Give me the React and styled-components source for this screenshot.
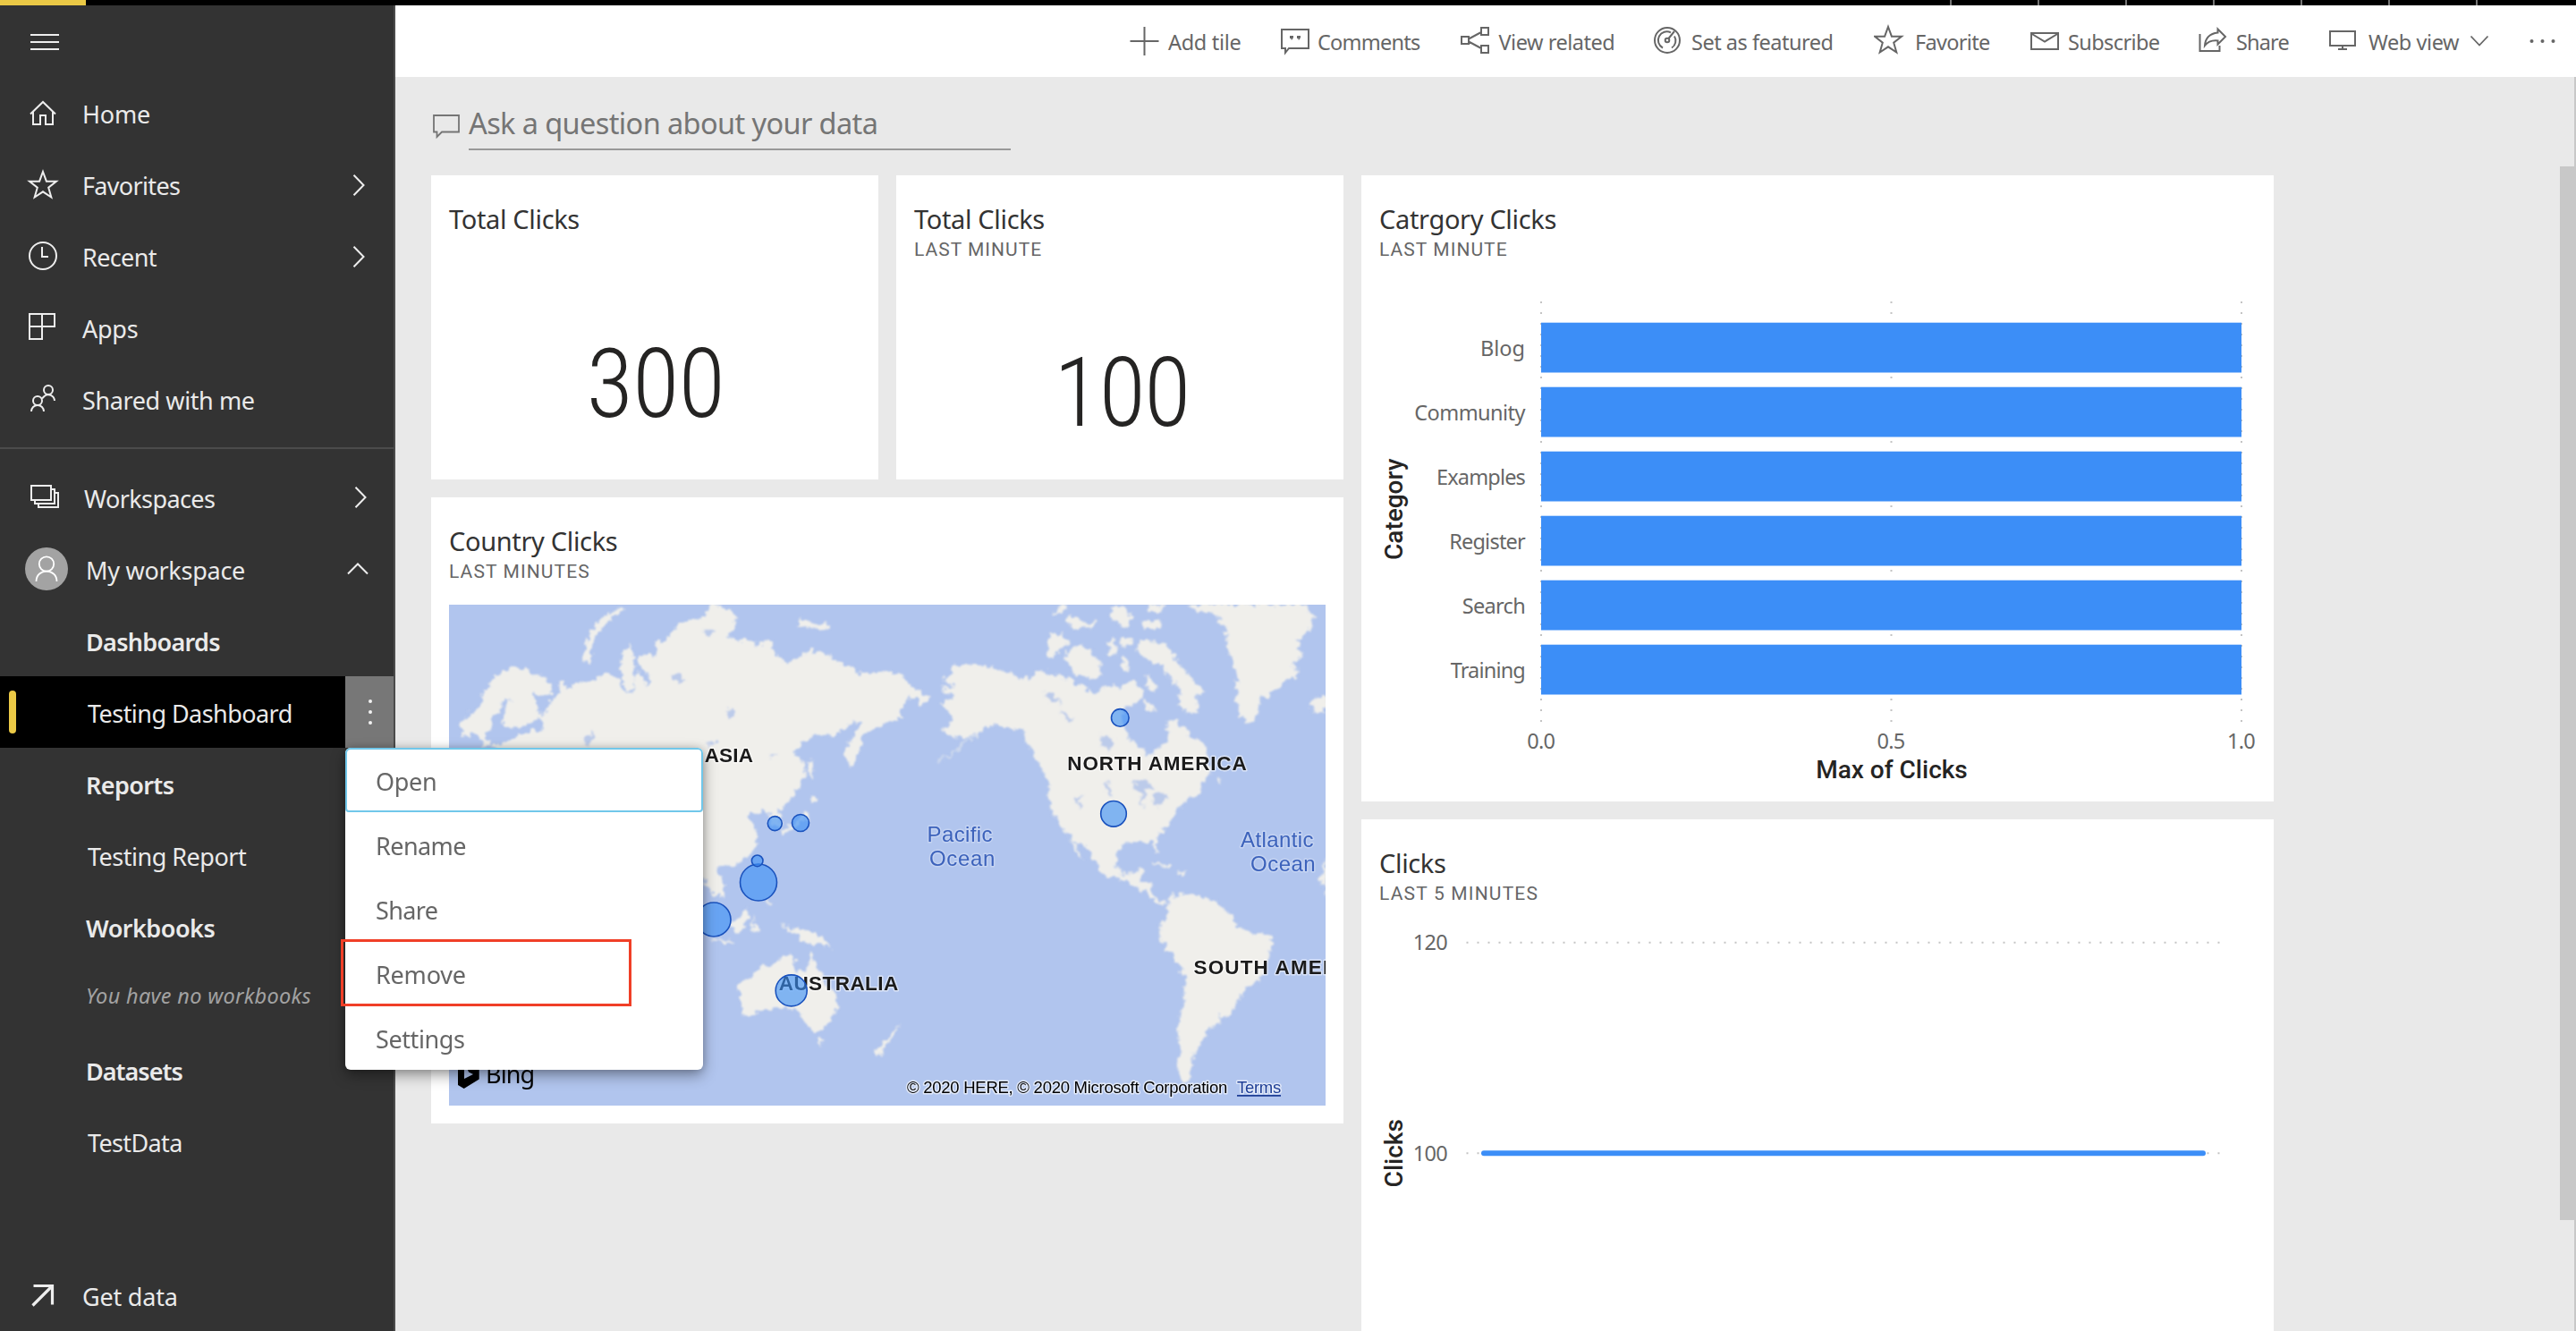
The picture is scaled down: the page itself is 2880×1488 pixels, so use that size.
import React from "react";
import styled, { createGlobalStyle, css } from "styled-components";

const UI = '"Noto Sans", "Open Sans", sans-serif';
const DIN = 'Roboto, "Noto Sans", sans-serif';
const MAP = '"Liberation Sans", Arial, sans-serif';

const GlobalStyle = createGlobalStyle`
  *, *::before, *::after { box-sizing: border-box; }
  html, body { margin: 0; padding: 0; background: #eaeaea; overflow: hidden; }
  body { font-family: ${UI}; font-weight: 370; }
  svg { display: block; flex: none; }
`;

const Page = styled.div`
  display: flex;
  flex-direction: column;
  width: 2880px;
  height: 1488px;
  overflow: hidden;
`;

const TopStrip = styled.div`
  display: flex;
  flex: none;
  height: 6px;
  background: #000;
`;
const TopAccent = styled.div`
  width: 96px;
  background: #ebc946;
  margin-right: auto;
`;
const TopCell = styled.div`
  width: 98px;
  border-left: 2px solid #767676;
  &:last-child { width: 112px; }
`;

const Body = styled.div`
  display: flex;
  flex: 1;
  min-height: 0;
`;

/* ---------- sidebar ---------- */

const Sidebar = styled.nav`
  position: relative;
  z-index: 2;
  display: flex;
  flex-direction: column;
  flex: none;
  width: 442px;
  background: #333;
  border-right: 2px solid #4b4b4b;
  color: #eaeaea;
`;
const MenuToggle = styled.div`
  display: flex;
  align-items: center;
  height: 82px;
  padding-left: 28px;
`;
const NavRow = styled.div`
  display: grid;
  grid-template-columns: ${(p) => p.$text}px 1fr auto;
  align-items: center;
  height: ${(p) => p.$height || 80}px;
`;
const NavGroup = styled.div`
  ${(p) => p.$ruled && css`
    margin-top: 12px;
    padding-top: 14px;
    border-top: 2px solid #4b4b4b;
  `}
`;
const IconSlot = styled.span`
  padding-left: 28px;
`;
const NavLabel = styled.span`
  font-size: 27px;
  line-height: 40px;
  font-weight: ${(p) => (p.$strong ? 590 : 370)};
  letter-spacing: ${(p) => p.$ls}px;
  white-space: nowrap;
  padding-top: ${(p) => p.$drop || 0}px;
`;
const EmptyNote = styled.span`
  font-size: 23.5px;
  line-height: 36px;
  font-style: italic;
  letter-spacing: 0.31px;
  color: #a2a2a2;
  white-space: nowrap;
  padding-bottom: 6px;
`;
const ChevronSlot = styled.span`
  padding-right: ${(p) => p.$right}px;
  padding-bottom: ${(p) => p.$lift || 0}px;
`;
const Avatar = styled.span`
  display: flex;
  width: 48px;
  height: 48px;
  margin-left: 28px;
  border-radius: 50%;
  background: #a3a3a3;
`;
const ActiveRow = styled.div`
  display: grid;
  grid-template-columns: 10px 8px 80px 1fr 54px;
  align-items: center;
  height: 80px;
  background: #000;
`;
const ActiveMark = styled.span`
  grid-column: 2;
  height: 48px;
  border-radius: 4px;
  background: #ebc946;
`;
const ActiveLabel = styled(NavLabel)`
  grid-column: 4;
`;
const MoreButton = styled.div`
  position: relative;
  grid-column: 5;
  display: flex;
  flex-direction: column;
  align-items: center;
  justify-content: center;
  gap: 8px;
  height: 80px;
  padding-left: 2px;
  background: #777;
`;
const MoreDot = styled.span`
  width: 4px;
  height: 4px;
  border-radius: 50%;
  background: #f2f2f2;
`;
const BottomSlot = styled.div`
  margin-top: auto;
`;

/* ---------- context menu ---------- */

const Menu = styled.div`
  position: absolute;
  top: 80px;
  left: 0;
  width: 400px;
  border-radius: 6px;
  background: #fff;
  box-shadow: 0 6px 16px rgba(0, 0, 0, 0.38), 0 0 10px rgba(0, 0, 0, 0.16);
`;
const MenuItem = styled.div`
  position: relative;
  display: flex;
  align-items: center;
  height: 72px;
  padding: 3px 0 0 34px;
  font-size: 27px;
  letter-spacing: ${(p) => p.$ls}px;
  color: #666;
  ${(p) => p.$focused && css`
    padding: 3px 0 0 32px;
    border: 2px solid #71c7ea;
    border-radius: 6px 6px 4px 4px;
  `}
`;
const Highlight = styled.span`
  position: absolute;
  left: -5px;
  top: -2px;
  width: 325px;
  height: 75px;
  border: 3px solid #f03f27;
`;

/* ---------- main ---------- */

const Main = styled.main`
  position: relative;
  display: flex;
  flex-direction: column;
  flex: 1;
  min-width: 0;
  overflow: hidden;
  background: #e9e9e9;
`;
const ActionBar = styled.header`
  display: flex;
  flex: none;
  align-items: center;
  height: 80px;
  padding-left: 821px;
  background: #fff;
  color: #666;
`;
const Action = styled.div`
  display: flex;
  align-items: center;
  width: ${(p) => p.$width}px;
  flex: none;
`;
const ActionLabel = styled.span`
  margin-left: ${(p) => p.$gap}px;
  padding-top: 2px;
  font-size: 23.5px;
  line-height: 34px;
  letter-spacing: ${(p) => p.$ls}px;
  white-space: nowrap;
`;
const ActionChevron = styled.span`
  margin-left: 12px;
`;

const AskBar = styled.div`
  display: flex;
  flex: none;
  align-items: flex-start;
  height: 110px;
  padding: 24px 0 0 40px;
`;
const AskIcon = styled.span`
  width: 42px;
  padding-top: 17px;
`;
const AskField = styled.div`
  width: 606px;
  height: 58px;
  border-bottom: 2px solid #999;
  font-size: 32.5px;
  line-height: 56px;
  letter-spacing: -0.61px;
  color: #757575;
  white-space: nowrap;
`;

const Board = styled.section`
  display: grid;
  grid-template-columns: 500px 500px 1020px;
  grid-auto-rows: 340px;
  gap: 20px;
  padding-left: 40px;
`;
const Tile = styled.article`
  display: flex;
  flex-direction: column;
  grid-column: ${(p) => p.$col};
  grid-row: ${(p) => p.$row};
  background: #fff;
`;
const TileHeader = styled.div`
  flex: none;
  padding: 30px 20px 0;
`;
const TileTitle = styled.div`
  font-size: 29px;
  line-height: 38px;
  letter-spacing: -0.34px;
  color: #333;
`;
const TileSubtitle = styled.div`
  font-family: ${DIN};
  font-weight: 430;
  font-size: 21px;
  line-height: 30px;
  letter-spacing: ${(p) => p.$ls}px;
  color: #666;
`;
const BigNumber = styled.div`
  display: flex;
  flex: 1;
  align-items: center;
  justify-content: center;
  padding-top: ${(p) => p.$drop}px;
  padding-left: ${(p) => p.$nudge}px;
  font-family: ${DIN};
  font-weight: 300;
  font-stretch: 75%;
  font-size: 107px;
  line-height: 120px;
  letter-spacing: ${(p) => p.$ls}px;
  color: #252423;
`;
const MapFrame = styled.div`
  margin: 22px 20px 20px;
`;
const MapText = styled.text`
  font-family: ${MAP};
  font-size: ${(p) => p.$size}px;
  font-weight: ${(p) => (p.$bold ? 700 : 400)};
  letter-spacing: ${(p) => p.$ls || 0}px;
  fill: ${(p) => p.$fill || "#1b1b1b"};
  paint-order: stroke;
  stroke: ${(p) => p.$halo || "rgba(255,255,255,0.5)"};
  stroke-width: 3px;
  stroke-linejoin: round;
`;
const BingText = styled.text`
  font-family: ${UI};
  font-size: 27px;
  letter-spacing: -0.9px;
`;
const AxisText = styled.text`
  font-family: ${UI};
  font-size: 23.5px;
  letter-spacing: ${(p) => (p.$ls === undefined ? -0.7 : p.$ls)}px;
  fill: #666;
  text-anchor: ${(p) => p.$anchor || "end"};
`;
const AxisTitle = styled.text`
  font-family: ${DIN};
  font-size: 28px;
  font-weight: 500;
  fill: #252423;
  text-anchor: middle;
`;
const ScrollRail = styled.div`
  position: absolute;
  top: 80px;
  right: 0;
  bottom: 0;
  width: 2px;
  background: #c8c8c8;
`;
const ScrollThumb = styled.div`
  position: absolute;
  top: 180px;
  right: 0;
  width: 18px;
  height: 1178px;
  background: #c8c8c8;
`;

/* ---------- icons ---------- */

const NavIcon = ({ box = "28 20 40 40", width = 2, children }) => (
  <svg width="40" height="40" viewBox={box} fill="none" stroke="#eee" strokeWidth={width}>
    {children}
  </svg>
);
const STAR = "M0-15.5L3.9-4.8H15L6.2 2.2L9.3 13L0 6.8L-9.3 13L-6.2 2.2L-15-4.8H-3.9Z";

const Chevron = ({ up }) =>
  up ? (
    <svg width="24" height="14" fill="none" stroke="#eee" strokeWidth="2"><path d="M1 12.5L12 1.5L23 12.5" /></svg>
  ) : (
    <svg width="14" height="24" fill="none" stroke="#eee" strokeWidth="2"><path d="M1.500 0.800L12.500 12L1.500 23.200" /></svg>
  );

const navIcons = {
  home: <NavIcon><path d="M34 39.500L48 26L62 39.500M37 37V51H45V41H51V51H59V37" /></NavIcon>,
  star: <NavIcon><path transform="translate(48 39.500)" d={STAR} /></NavIcon>,
  clock: <NavIcon><circle cx="48" cy="38" r="15" /><path d="M47 28V39H54" /></NavIcon>,
  apps: <NavIcon><path d="M33 23H61V37H33ZM33 37V51H47V23" /></NavIcon>,
  shared: (
    <NavIcon>
      <circle cx="54" cy="28" r="5" />
      <circle cx="42" cy="40" r="5" />
      <path d="M35 52A7 7 0 0 1 49 52M47 37.500L49.500 35A7 7 0 0 1 61 40" />
    </NavIcon>
  ),
  stack: <NavIcon><path d="M35 27H57V43H35ZM39 43V47H61V31H57M43 47V51H65V35H61" /></NavIcon>,
  arrow: <NavIcon width={3.2} box="28 21 40 40"><path d="M37.500 29.500H58.500V50.500M58 30L36.500 51.500" /></NavIcon>,
};

const ActionIcon = ({ x, children }) => (
  <svg width="34" height="40" viewBox={`${x} 26 34 40`} fill="none" stroke="#666" strokeWidth="2">
    {children}
  </svg>
);

const actions = [
  { label: "Add tile", width: 168, gap: 9, ls: -0.31, icon: <ActionIcon x={1263}><path d="M1279.500 30V62M1263.500 46H1295.500" /></ActionIcon> },
  {
    label: "Comments", width: 201, gap: 8, ls: -0.75,
    icon: (
      <ActionIcon x={1431}>
        <path d="M1433 33H1463V54H1441L1437 59V54H1433Z" />
        <path d="M1442 40H1446V42L1444.500 44.500H1443.500V43H1442ZM1450 40H1454V42L1452.500 44.500H1451.500V43H1450Z" fill="#666" stroke="none" />
      </ActionIcon>
    ),
  },
  {
    label: "View related", width: 216, gap: 9.500, ls: -0.48,
    icon: (
      <ActionIcon x={1632}>
        <path d="M1634 41H1642V49H1634ZM1656 31H1664V39H1656ZM1656 51H1664V59H1656ZM1642 43.500L1656 36M1642 46.500L1656 54" />
      </ActionIcon>
    ),
  },
  {
    label: "Set as featured", width: 247, gap: 9, ls: -0.48,
    icon: (
      <ActionIcon x={1848}>
        <circle cx="1864" cy="45" r="14" />
        <path d="M1859 53.500A9.500 9.500 0 0 1 1868 36.400M1872 40.500A9.500 9.500 0 0 1 1869 53.500M1865.500 43L1872 35" />
        <circle cx="1864" cy="45" r="2.300" />
      </ActionIcon>
    ),
  },
  { label: "Favorite", width: 175, gap: 12, ls: -0.68, icon: <ActionIcon x={2095}><path transform="translate(2111 45.500)" d={STAR} /></ActionIcon> },
  { label: "Subscribe", width: 188, gap: 8, ls: -0.6, icon: <ActionIcon x={2270}><path d="M2271 37H2301V55H2271ZM2271 37.500L2286 46.500L2301 37.500" /></ActionIcon> },
  {
    label: "Share", width: 145, gap: 8, ls: -0.85,
    icon: (
      <ActionIcon x={2458}>
        <path d="M2459.500 38V57H2481.500V51M2479.500 32.500L2488 41L2479.500 49.500V45.500Q2470 44.500 2465 51Q2466 38 2479.500 36.500Z" />
      </ActionIcon>
    ),
  },
  { label: "Web view", width: 225, gap: 11, ls: -0.42, chevron: true, icon: <ActionIcon x={2603}><path d="M2605 35H2633V51H2605ZM2619 51V55M2614 55H2624" /></ActionIcon> },
];

/* ---------- visuals ---------- */

const eurasia =
  "M918 840L600 840L380 560L200 450L245 445L290 425L350 410L385 405L375 375L405 325L440 300L432 262L450 265L455 290L500 270L545 262L600 240L640 262L655 300L675 308L692 288L685 250L705 235L722 262L730 284L742 260L705 215L700 190L735 182L765 195L755 155L805 140L820 110L870 88L925 80L945 42L990 50L1025 75L1025 110L1000 140L1070 145L1100 160L1145 145L1165 185L1190 210L1250 195L1275 170L1330 190L1390 215L1440 240L1560 238L1600 260L1640 290L1680 315L1655 335L1610 310L1580 350L1585 370L1560 378L1500 402L1452 425L1445 470L1415 520L1395 480L1410 440L1455 385L1435 382L1400 395L1375 420L1280 425L1245 455L1220 480L1258 500L1262 530L1238 580L1200 620L1168 640L1180 660L1182 690L1150 690L1135 650L1100 645L1068 658L1095 700L1098 745L1072 780L1030 800L970 808L972 828L992 860L988 888L960 895L930 860Z";
const scandinavia =
  "M105 385L130 365L165 345L175 310L205 265L240 235L290 225L325 228L350 250L385 255L412 280L410 300L370 308L345 300L365 345L380 372L330 388L270 405L250 390L252 350L275 318L245 320L240 345L212 370L208 410L185 425L205 445L180 460L168 432L140 412L115 428Z";
const asiaIslands = [
  "M515 200L525 150L560 95L600 70L645 48L650 60L600 90L572 115L548 150L540 212Z",
  "M640 225L650 180L668 158L685 185L686 285L665 302L650 265Z",
  "M1238 85L1290 95L1345 100L1340 112L1270 108L1240 110Z",
  "M1265 500L1282 498L1290 550L1278 545Z",
  "M1280 602L1302 610L1282 626Z",
  "M1262 640L1270 660L1230 690L1185 715L1180 700L1240 675Z",
  "M1128 895L1148 910L1130 922Z",
  "M1010 975L1040 960L1070 925L1068 950L1055 995L1020 998Z",
  "M940 1016L1025 1024L1025 1031L942 1023Z",
  "M1085 950L1095 980L1105 1000L1085 998Z",
  "M1185 975L1210 995L1240 985L1290 1000L1325 1022L1350 1045L1300 1030L1268 1036L1240 1010L1200 998Z",
  "M1040 1145L1080 1130L1110 1100L1150 1095L1170 1075L1210 1062L1228 1080L1222 1102L1258 1118L1272 1090L1280 1052L1292 1090L1312 1122L1340 1162L1370 1190L1366 1225L1340 1275L1300 1285L1265 1275L1245 1232L1215 1225L1200 1215L1130 1225L1090 1240L1050 1246L1055 1215L1035 1170Z",
  "M1300 1310L1325 1310L1314 1332Z",
  "M1580 1270L1560 1295L1515 1360L1490 1352L1530 1310Z",
];
const americas = [
  "M160 262L200 225L240 215L320 222L400 245L430 262L490 235L550 245L600 265L640 290L680 300L720 275L760 285L800 260L835 290L830 320L805 332L770 345L762 380L778 405L782 432L820 458L858 480L885 462L915 440L918 415L908 385L940 375L972 400L1000 430L1042 450L1050 490L1060 530L1030 560L1028 590L985 608L960 632L930 660L922 690L885 712L880 740L892 772L876 765L862 735L820 732L770 740L747 765L745 805L770 832L805 825L825 808L835 815L822 850L860 858L862 882L885 905L915 908L900 918L865 905L840 880L800 860L760 845L720 840L690 820L670 790L640 750L600 730L560 695L530 655L518 600L520 560L490 520L470 480L440 440L430 410L390 400L330 395L300 400L278 422L240 428L200 430L162 405L200 375L155 328L205 312L160 285L205 280Z",
  "M590 722L608 745L632 790L612 775Z",
  "M980 42L1030 62L1080 72L1110 110L1115 160L1140 210L1150 270L1145 320L1160 370L1190 392L1212 375L1225 320L1270 300L1300 268L1362 245L1332 218L1370 190L1352 150L1390 120L1408 85L1380 42Z",
  "M1385 335L1420 310L1450 308L1450 350L1400 352Z",
  "M512 190L520 125L560 130L585 155L550 175L528 202Z",
  "M568 182L620 158L660 180L690 215L695 252L640 255L600 240Z",
  "M712 150L740 145L745 190L722 185ZM760 140L800 135L795 160L765 165ZM760 200L775 190L785 240L765 240Z",
  "M530 72L560 42L582 44L560 66ZM570 85L600 72L640 95L680 90L675 110L600 112ZM720 50L770 45L800 75L770 115L730 80ZM828 92L890 88L892 112L835 115ZM850 42L905 44L890 66L855 60Z",
  "M815 182L818 150L900 150L930 180L960 220L1002 260L1042 300L1010 310L1020 352L990 360L950 332L958 290L930 260L900 220L850 205Z",
  "M845 250L870 260L875 295L850 290ZM835 325L870 335L880 352L845 345Z",
  "M885 1005L900 970L915 945L920 900L960 885L1040 895L1080 910L1130 950L1152 982L1190 1000L1250 1005L1280 1025L1250 1070L1240 1110L1220 1142L1170 1170L1140 1220L1110 1246L1085 1242L1095 1268L1050 1288L1040 1310L1008 1345L1000 1380L988 1430L965 1436L950 1400L960 1350L950 1280L970 1200L978 1130L940 1080L910 1042Z",
  "M1450 775L1430 840L1450 895Z",
  "M870 796L922 808L920 814L872 802ZM955 822L985 825L960 832Z",
  "M1075 545L1100 555L1090 568Z",
];
const lakes = [
  "M990 358L1008 345L1028 358L1012 376Z",
  "M522 438L548 412L552 430L536 452Z",
  "M925 445L960 440L955 455L935 460Z",
  "M1140 480L1168 476L1160 492Z",
  "M810 240L860 262L850 268L815 262Z",
  "M915 120L960 112L955 125L925 130Z",
];
const amLakes = [
  "M500 300L545 310L560 330L520 322ZM560 350L600 375L590 385L565 365Z",
  "M700 565L715 560L730 600L715 600Z",
  "M800 560L850 552L870 580L840 580L835 628L825 628L828 590ZM860 600L892 590L922 605L880 632Z",
  "M690 420L740 440L720 470L700 450Z",
  "M605 610L625 600L620 635Z",
];

const bubbles = [
  [866.300, 920.600, 8], [895, 920, 9.500], [848, 986.500, 20.500], [846.700, 962.300, 6.300],
  [798, 1028, 19], [884.700, 1107.400, 17.500], [1252.300, 802.400, 9.800], [1245, 909.800, 14.300],
];

const WorldMap = () => (
  <svg width="980" height="560" viewBox="502 676 980 560">
    <defs>
      <filter id="coast" x="-5%" y="-5%" width="110%" height="110%">
        <feTurbulence type="fractalNoise" baseFrequency="0.14" numOctaves="3" seed="7" />
        <feDisplacementMap in="SourceGraphic" scale="12" xChannelSelector="R" yChannelSelector="G" />
        <feGaussianBlur stdDeviation="0.9" />
      </filter>
    </defs>
    <rect x="502" y="676" width="980" height="560" fill="#b1c5ee" />
    <g filter="url(#coast)" fill="#f0efeb">
      <g transform="translate(480 660) scale(0.33333 0.3827)">
        <path d={eurasia} />
        <path d={scandinavia} />
        {asiaIslands.map((d) => <path key={d} d={d} />)}
        <g fill="#bccbea">{lakes.map((d) => <path key={d} d={d} />)}</g>
      </g>
      <g transform="translate(1000 660) scale(0.33333 0.3827)">
        {americas.map((d) => <path key={d} d={d} />)}
        <path d="M280 422L240 442L190 480L140 502" fill="none" stroke="#d5deed" strokeWidth="6" />
        <g fill="#bccbea">{amLakes.map((d) => <path key={d} d={d} />)}</g>
      </g>
    </g>
    <MapText $size={22.500} $bold $ls={0.160} x="787.700" y="852">ASIA</MapText>
    <MapText $size={22.500} $bold $ls={0.830} x="1193.300" y="860.500">NORTH AMERICA</MapText>
    <MapText $size={22.500} $bold $ls={0.440} x="870.700" y="1106.500">AUSTRALIA</MapText>
    <MapText $size={22.500} $bold $ls={1.150} x="1334.500" y="1088.500">SOUTH AMERICA</MapText>
    <MapText $size={24} $ls={0.390} $fill="#3c62bb" $halo="rgba(255,255,255,0.25)" x="1036.500" y="941">Pacific</MapText>
    <MapText $size={24} $ls={0.660} $fill="#3c62bb" $halo="rgba(255,255,255,0.25)" x="1039" y="967.500">Ocean</MapText>
    <MapText $size={24} $ls={0.400} $fill="#3c62bb" $halo="rgba(255,255,255,0.25)" x="1387" y="947">Atlantic</MapText>
    <MapText $size={24} $ls={0.500} $fill="#3c62bb" $halo="rgba(255,255,255,0.25)" x="1398" y="974">Ocean</MapText>
    {bubbles.map(([x, y, r]) => (
      <circle key={`${x}-${y}`} cx={x} cy={y} r={r} fill="#3b8ff5" fillOpacity="0.62" stroke="#1a52bd" strokeWidth="1.6" />
    ))}
    <path d="M512 1185L519 1188V1206L529 1201L524 1198.500L521 1191L535.700 1196V1206.500L518.700 1217L512 1213Z" />
    <BingText x="543" y="1211">Bing</BingText>
    <MapText $size={18.500} $ls={-0.260} $fill="#000" $halo="rgba(255,255,255,0.6)" x="1014" y="1222">© 2020 HERE, © 2020 Microsoft Corporation</MapText>
    <MapText $size={18.500} $ls={-0.280} $fill="#1f3f96" $halo="rgba(255,255,255,0.6)" x="1383" y="1222">Terms</MapText>
    <rect x="1383" y="1224" width="49" height="1.800" fill="#1f3f96" />
  </svg>
);

const categories = [
  ["Blog", 0], ["Community", -0.540], ["Examples", -0.830],
  ["Register", -0.780], ["Search", -0.680], ["Training", -0.820],
];

const CategoryChart = () => (
  <svg width="1020" height="602" viewBox="1522 294 1020 602">
    {[1723, 2114.500, 2506].map((x) => (
      <line key={x} x1={x} x2={x} y1="337" y2="808" stroke="#c4c4c4" strokeWidth="2" strokeDasharray="2 10" />
    ))}
    {categories.map(([name, ls], i) => (
      <g key={name}>
        <rect x="1723" y={360.700 + i * 72} width="783" height="55.800" fill="#3c8ef7" />
        <AxisText $ls={ls} x="1705" y={397.500 + i * 72}>{name}</AxisText>
      </g>
    ))}
    <AxisText $anchor="middle" x="1722.700" y="837">0.0</AxisText>
    <AxisText $anchor="middle" x="2114" y="837">0.5</AxisText>
    <AxisText $anchor="middle" x="2505.500" y="837">1.0</AxisText>
    <AxisTitle x="2115" y="870">Max of Clicks</AxisTitle>
    <AxisTitle transform="translate(1568 569.300) rotate(-90)">Category</AxisTitle>
  </svg>
);

const ClicksChart = () => (
  <svg width="1020" height="602" viewBox="1522 1014 1020 602">
    {[1053.800, 1289.300].map((y) => (
      <line key={y} x1="1639.500" x2="2482" y1={y} y2={y} stroke="#c4c4c4" strokeWidth="2" strokeDasharray="2 10" />
    ))}
    <line x1="1659" x2="2463" y1="1289.300" y2="1289.300" stroke="#3c8ef7" strokeWidth="6" strokeLinecap="round" />
    <AxisText x="1618" y="1062">120</AxisText>
    <AxisText x="1618" y="1297.500">100</AxisText>
    <AxisTitle transform="translate(1568 1289.300) rotate(-90)">Clicks</AxisTitle>
  </svg>
);

/* ---------- data ---------- */

const primaryNav = [
  { label: "Home", icon: "home", ls: -0.200 },
  { label: "Favorites", icon: "star", ls: -0.670, more: true },
  { label: "Recent", icon: "clock", ls: -0.620, more: true },
  { label: "Apps", icon: "apps", ls: -0.260 },
  { label: "Shared with me", icon: "shared", ls: -0.400 },
];

const menuItems = [
  { label: "Open", ls: -0.310, focused: true },
  { label: "Rename", ls: -0.560 },
  { label: "Share", ls: -0.620 },
  { label: "Remove", ls: -0.200 , marked: true },
  { label: "Settings", ls: -0.400 },
];

const SectionRow = ({ label, ls }) => (
  <NavRow $text={96}><span /><NavLabel $strong $ls={ls} $drop={3}>{label}</NavLabel></NavRow>
);
const LeafRow = ({ label, ls }) => (
  <NavRow $text={98}><span /><NavLabel $ls={ls} $drop={3}>{label}</NavLabel></NavRow>
);
const Header = ({ title, subtitle, ls }) => (
  <TileHeader>
    <TileTitle>{title}</TileTitle>
    {subtitle && <TileSubtitle $ls={ls}>{subtitle}</TileSubtitle>}
  </TileHeader>
);

export default function App() {
  return (
    <Page>
      <GlobalStyle />
      <TopStrip>
        <TopAccent />
        {[1, 2, 3, 4, 5, 6, 7].map((n) => <TopCell key={n} />)}
      </TopStrip>
      <Body>
        <Sidebar>
          <MenuToggle>
            <NavIcon box="28 27 40 40"><path d="M34 39H66M34 47H66M34 55H66" /></NavIcon>
          </MenuToggle>
          <NavGroup>
            {primaryNav.map((item) => (
              <NavRow key={item.label} $text={92}>
                <IconSlot>{navIcons[item.icon]}</IconSlot>
                <NavLabel $ls={item.ls}>{item.label}</NavLabel>
                {item.more && <ChevronSlot $right={32} $lift={3}><Chevron /></ChevronSlot>}
              </NavRow>
            ))}
          </NavGroup>
          <NavGroup $ruled>
            <NavRow $text={94}>
              <IconSlot>{navIcons.stack}</IconSlot>
              <NavLabel $ls={-0.600} $drop={4}>Workspaces</NavLabel>
              <ChevronSlot $right={30}><Chevron /></ChevronSlot>
            </NavRow>
            <NavRow $text={96}>
              <Avatar>
                <svg width="48" height="48" fill="none" stroke="#fff" strokeWidth="1.8">
                  <circle cx="24" cy="18.500" r="8.200" />
                  <path d="M12.500 38C12.500 22.800 35.500 22.800 35.500 38" />
                </svg>
              </Avatar>
              <NavLabel $ls={-0.270} $drop={4}>My workspace</NavLabel>
              <ChevronSlot $right={28}><Chevron up /></ChevronSlot>
            </NavRow>
            <SectionRow label="Dashboards" ls={-0.700} />
            <ActiveRow>
              <ActiveMark />
              <ActiveLabel $ls={-0.550} $drop={4}>Testing Dashboard</ActiveLabel>
              <MoreButton>
                <MoreDot /><MoreDot /><MoreDot />
                <Menu>
                  {menuItems.map((item) => (
                    <MenuItem key={item.label} $ls={item.ls} $focused={item.focused}>
                      {item.label}
                      {item.marked && <Highlight />}
                    </MenuItem>
                  ))}
                </Menu>
              </MoreButton>
            </ActiveRow>
            <SectionRow label="Reports" ls={-0.620} />
            <LeafRow label="Testing Report" ls={-0.500} />
            <SectionRow label="Workbooks" ls={-0.520} />
            <NavRow $text={96}><span /><EmptyNote>You have no workbooks</EmptyNote></NavRow>
            <SectionRow label="Datasets" ls={-1.000} />
            <LeafRow label="TestData" ls={-0.640} />
          </NavGroup>
          <BottomSlot>
            <NavRow $text={92} $height={78}>
              <IconSlot>{navIcons.arrow}</IconSlot>
              <NavLabel $ls={-0.200} $drop={2}>Get data</NavLabel>
            </NavRow>
          </BottomSlot>
        </Sidebar>
        <Main>
          <ActionBar>
            {actions.map((a) => (
              <Action key={a.label} $width={a.width}>
                {a.icon}
                <ActionLabel $gap={a.gap} $ls={a.ls}>{a.label}</ActionLabel>
                {a.chevron && (
                  <ActionChevron>
                    <svg width="22" height="14" fill="none" stroke="#666" strokeWidth="1.8"><path d="M1.500 1.500L11 11.500L20.500 1.500" /></svg>
                  </ActionChevron>
                )}
              </Action>
            ))}
            <svg width="30" height="8" fill="#666">
              <circle cx="2.500" cy="4" r="2" /><circle cx="14.500" cy="4" r="2" /><circle cx="26.500" cy="4" r="2" />
            </svg>
          </ActionBar>
          <AskBar>
            <AskIcon>
              <svg width="34" height="30" fill="none" stroke="#757575" strokeWidth="1.8">
                <path d="M3 2H31V20.500H12L6.500 26V20.500H3Z" />
              </svg>
            </AskIcon>
            <AskField>Ask a question about your data</AskField>
          </AskBar>
          <Board>
            <Tile $col="1" $row="1">
              <Header title="Total Clicks" />
              <BigNumber $drop={59} $nudge={2} $ls={-0.500}>300</BigNumber>
            </Tile>
            <Tile $col="2" $row="1">
              <Header title="Total Clicks" subtitle="LAST MINUTE" ls={1.000} />
              <BigNumber $drop={49} $nudge={4} $ls={-1.500}>100</BigNumber>
            </Tile>
            <Tile $col="3" $row="1 / span 2">
              <Header title="Catrgory Clicks" subtitle="LAST MINUTE" ls={1.050} />
              <CategoryChart />
            </Tile>
            <Tile $col="1 / span 2" $row="2 / span 2">
              <Header title="Country Clicks" subtitle="LAST MINUTES" ls={1.100} />
              <MapFrame><WorldMap /></MapFrame>
            </Tile>
            <Tile $col="3" $row="3 / span 2">
              <Header title="Clicks" subtitle="LAST 5 MINUTES" ls={1.180} />
              <ClicksChart />
            </Tile>
          </Board>
          <ScrollRail />
          <ScrollThumb />
        </Main>
      </Body>
    </Page>
  );
}
